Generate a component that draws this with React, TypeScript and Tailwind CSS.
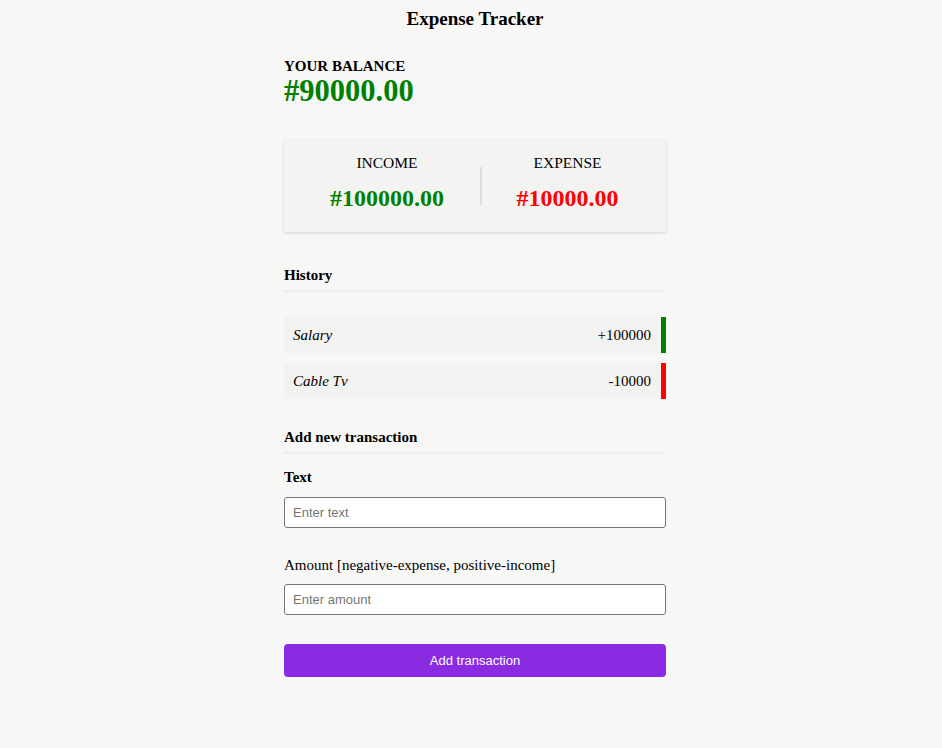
import { useState } from "react";

type Tx = { id: number; text: string; amount: number };

const App = () => {
  const [transactions] = useState<Tx[]>([
    { id: 1, text: "Salary", amount: 100000 },
    { id: 2, text: "Cable Tv", amount: -10000 },
  ]);

  const income = transactions.filter((t) => t.amount > 0).reduce((a, t) => a + t.amount, 0);
  const expense = transactions.filter((t) => t.amount < 0).reduce((a, t) => a - t.amount, 0);
  const balance = income - expense;

  return (
    <div className="min-h-[748px] bg-[#f7f7f6] text-black font-['Liberation_Serif',serif]">
      <div className="flex justify-center pl-2">
        <div className="w-[382px]">
          {/* Header */}
          <h2 className="pt-[7px] text-center text-[19px] font-bold leading-[24px]">Expense Tracker</h2>

          {/* Balance */}
          <h4 className="mt-[27px] text-[15px] font-bold uppercase leading-[16px]">Your Balance</h4>
          <h1 className="mt-[1px] text-[30.5px] font-bold leading-[32px] text-[#008000]">#{balance.toFixed(2)}</h1>

          {/* Income / Expense */}
          <div className="mt-[33px] flex items-center bg-[#f3f3f2] pb-[19px] pl-[10px] pr-[13px] pt-[14px] shadow-[0_1px_3px_rgba(0,0,0,0.15)]">
            <div className="w-[186px] text-center">
              <p className="text-[15.5px] uppercase leading-[17px]">Income</p>
              <p className="mt-[12px] text-[24px] font-bold leading-[30px] text-[#008000]">#{income.toFixed(2)}</p>
            </div>
            <div className="mt-[4px] h-[38px] w-[2px] bg-[#dddddd]" />
            <div className="flex-1 text-center">
              <p className="text-[15.5px] uppercase leading-[17px]">Expense</p>
              <p className="mt-[12px] text-[24px] font-bold leading-[30px] text-[#ff0000]">#{expense.toFixed(2)}</p>
            </div>
          </div>

          {/* History */}
          <h3 className="mt-[34px] border-b-2 border-[#eeeeec] pb-[6px] text-[15px] font-bold leading-[18px]">History</h3>
          <ul className="mt-[25px] flex flex-col gap-[10px]">
            {transactions.map((t) => (
              <li
                key={t.id}
                className={`flex h-[36px] items-center justify-between border-r-[5px] bg-[#f2f2f1] pl-[9px] pr-[10px] text-[15px] ${
                  t.amount > 0 ? "border-[#008000]" : "border-[#ff0000]"
                }`}
              >
                <span className="italic">{t.text}</span>
                <span>{t.amount > 0 ? "+" : ""}{t.amount}</span>
              </li>
            ))}
          </ul>

          {/* Add new transaction */}
          <h3 className="mt-[29px] border-b-2 border-[#eeeeec] pb-[6px] text-[15px] font-bold leading-[18px]">Add new transaction</h3>
          <form onSubmit={(e) => e.preventDefault()}>
            <label className="mt-[14px] block text-[15px] font-bold leading-[18px]">Text</label>
            <input
              type="text"
              placeholder="Enter text"
              className="mt-[11px] block h-[31px] w-full rounded-[3px] border border-[#767676] bg-white px-[8px] font-['Liberation_Sans',sans-serif] text-[13px] placeholder:text-[#757575]"
            />
            <label className="mt-[28px] block text-[15px] leading-[18px]">Amount [negative-expense, positive-income]</label>
            <input
              type="number"
              placeholder="Enter amount"
              className="mt-[10px] block h-[31px] w-full rounded-[3px] border border-[#767676] bg-white px-[8px] font-['Liberation_Sans',sans-serif] text-[13px] placeholder:text-[#757575]"
            />
            <button
              type="submit"
              className="mt-[29px] block h-[33px] w-full rounded-[4px] bg-[#8a2be2] font-['Liberation_Sans',sans-serif] text-[13px] text-white"
            >
              Add transaction
            </button>
          </form>
        </div>
      </div>
    </div>
  );
};

export default App;
